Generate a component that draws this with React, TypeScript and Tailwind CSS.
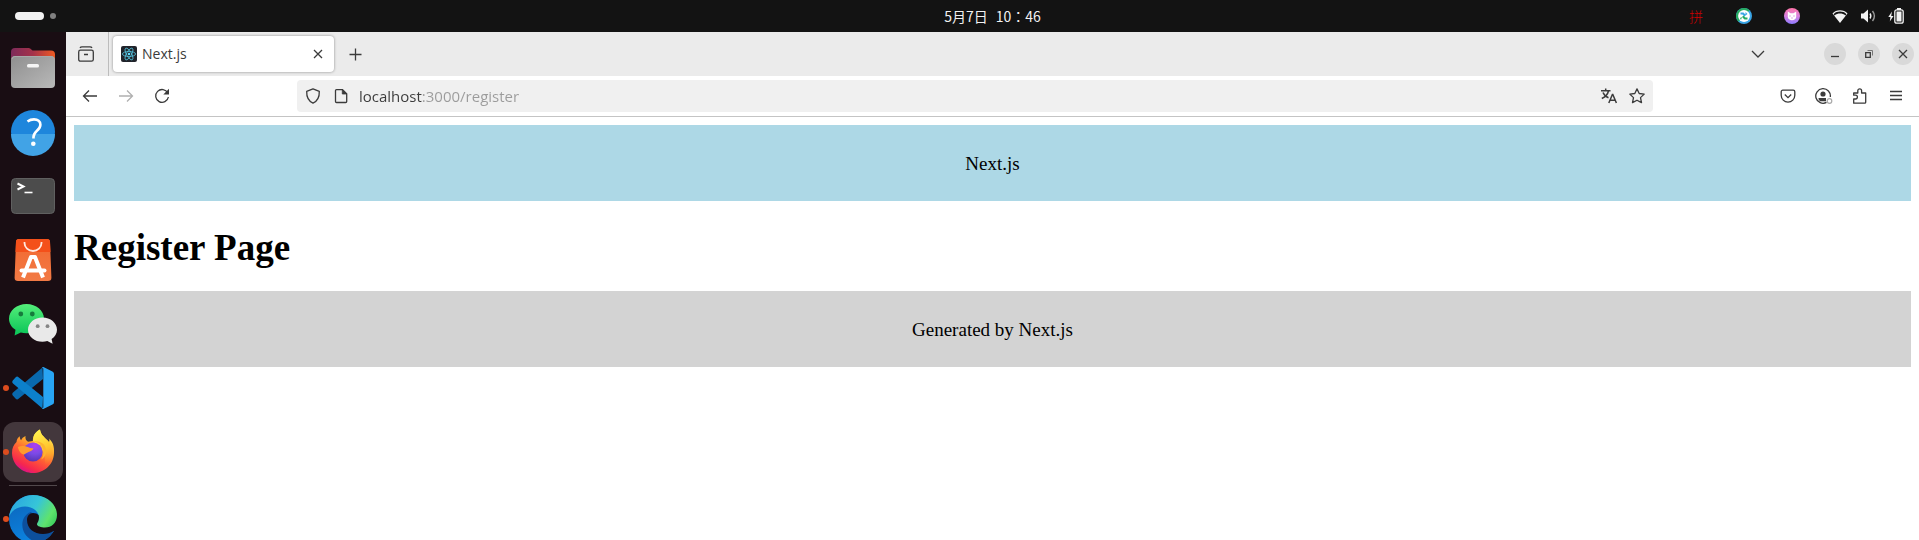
import { useState } from 'react';
import type { ReactNode } from 'react';

/* ---------- Dock icons ---------- */

const FilesIcon = () => (
  <svg viewBox="0 0 48 48" className="h-12 w-12">
    <defs>
      <linearGradient id="files-back" x1="0" x2="1">
        <stop offset="0" stopColor="#7d2a5a" />
        <stop offset="0.5" stopColor="#a5324a" />
        <stop offset="1" stopColor="#f05a22" />
      </linearGradient>
      <linearGradient id="files-front" x1="0" y1="0" x2="1" y2="1">
        <stop offset="0" stopColor="#8f8f8f" />
        <stop offset="1" stopColor="#b9b9b9" />
      </linearGradient>
    </defs>
    <path d="M2 16V8a4 4 0 0 1 4-4h13.500a3 3 0 0 1 2 .8L23.500 6.500H42a4 4 0 0 1 4 4V20H2z" fill="url(#files-back)" />
    <rect x="2" y="12" width="44" height="32" rx="4" fill="url(#files-front)" />
    <path d="M3 15a3 3 0 0 1 3-2.500h36a3 3 0 0 1 3 2.500" fill="none" stroke="#a9a9a9" />
    <rect x="18" y="20" width="12" height="3.500" rx="1.500" fill="#f5f5f5" />
  </svg>
);

const HelpIcon = () => (
  <svg viewBox="0 0 48 48" className="h-12 w-12">
    <circle cx="24" cy="24" r="22" fill="#1e86dc" />
    <path d="M2 26a22 22 0 0 0 44 0z" fill="#41a3e6" />
    <path d="M18.500 13.500c2-1.500 4.200-2.100 6.500-2.100 3.800 0 6.400 2 6.400 5.300 0 3-1.700 4.500-3.700 6.200-2.200 1.900-3.200 3.200-3.200 6.200v1.400" fill="none" stroke="#fff" strokeWidth="2.600" />
    <circle cx="24.300" cy="35.800" r="2.300" fill="#fff" />
  </svg>
);

const TerminalIcon = () => (
  <svg viewBox="0 0 48 48" className="h-12 w-12">
    <rect x="2.500" y="6.500" width="43" height="35" rx="4" fill="#4c4c4c" stroke="#606060" />
    <path d="M8.500 11.500l6 3-6 3" fill="none" stroke="#fff" strokeWidth="2" />
    <path d="M15.500 20.500h8" stroke="#fff" strokeWidth="1.600" />
  </svg>
);

const SoftwareIcon = () => (
  <svg viewBox="0 0 48 48" className="h-12 w-12">
    <defs>
      <linearGradient id="bag" x1="0" y1="0" x2="0" y2="1">
        <stop offset="0" stopColor="#f2682f" />
        <stop offset="1" stopColor="#f27a45" />
      </linearGradient>
    </defs>
    <path d="M10 3h28a3 3 0 0 1 3 2.800l1.400 35.700a3.400 3.400 0 0 1-3.400 3.500H9a3.400 3.400 0 0 1-3.400-3.500L7 5.800A3 3 0 0 1 10 3z" fill="url(#bag)" />
    <path d="M10 3h28a3 3 0 0 1 3 2.800l.5 10.200h-35L7 5.800A3 3 0 0 1 10 3z" fill="#f4501a" />
    <path d="M15.500 6v1a8.500 8 0 0 0 17 0V6" fill="none" stroke="#ffe9df" strokeWidth="1.800" />
    <path d="M14 41.500l8-20.500h4l8 20.500" fill="none" stroke="#fff" strokeWidth="4" strokeLinejoin="round" />
    <path d="M12.500 34.500h23" stroke="#fff" strokeWidth="4" strokeLinecap="round" />
  </svg>
);

const WeChatIcon = () => (
  <svg viewBox="0 0 48 48" className="h-12 w-12">
    <defs>
      <linearGradient id="wechat-green" x1="0" y1="0" x2="0" y2="1">
        <stop offset="0" stopColor="#54ee7a" />
        <stop offset="1" stopColor="#09c457" />
      </linearGradient>
    </defs>
    <path d="M17.500 4C7.800 4 0 10.500 0 18.700c0 4.500 2.500 8.500 6.500 11.100L5.600 35.500l6.200-3.100c1.800.5 3.700.8 5.700.8 9.700 0 17.500-6.300 17.500-14.500S27.200 4 17.500 4z" fill="url(#wechat-green)" />
    <circle cx="11.800" cy="14" r="2.400" fill="#167b3c" />
    <circle cx="23.300" cy="14" r="2.400" fill="#167b3c" />
    <path d="M33.500 17.500C25.500 17.500 19 23 19 29.700s6.500 12.100 14.500 12.100c1.700 0 3.300-.2 4.800-.7l5.300 2.600-1-4.600C45.900 36.900 48 33.500 48 29.700c0-6.700-6.500-12.200-14.500-12.200z" fill="#e9e9e9" />
    <circle cx="28.700" cy="26.200" r="1.900" fill="#858585" />
    <circle cx="38.500" cy="26.200" r="1.900" fill="#858585" />
  </svg>
);

const CodeIcon = () => (
  <svg viewBox="0 0 48 48" className="h-12 w-12">
    <path d="M4 31.800c-1-.9-1-2.400 0-3.300L33.500 3.500l.5 11.500L9.500 34.800a2.200 2.200 0 0 1-2.800 0z" fill="#0969ae" />
    <path d="M4 16.200c-1 .9-1 2.400 0 3.300L33.500 44.500l.5-11.500L9.500 13.200a2.200 2.200 0 0 0-2.800 0z" fill="#0c80cb" />
    <path d="M33 3.200c.3-.3.9-.3 1.400-.1l9 4.300A2.500 2.500 0 0 1 45 9.700v28.600a2.500 2.500 0 0 1-1.600 2.300l-9 4.300c-.5.200-1.100.2-1.400-.1l1.300-1.300V4.500z" fill="#28a4f3" />
  </svg>
);

const FirefoxIcon = () => (
  <svg viewBox="0 0 48 48" className="h-12 w-12">
    <defs>
      <linearGradient id="fx-body" x1="0.800" y1="0.050" x2="0.300" y2="1">
        <stop offset="0.050" stopColor="#ffe74a" />
        <stop offset="0.350" stopColor="#ffa72b" />
        <stop offset="0.600" stopColor="#ff5b35" />
        <stop offset="0.850" stopColor="#f6274e" />
        <stop offset="1" stopColor="#d8108f" />
      </linearGradient>
      <linearGradient id="fx-flame" x1="0.400" y1="0" x2="0.600" y2="1">
        <stop offset="0" stopColor="#fff44f" />
        <stop offset="0.550" stopColor="#ffc42e" />
        <stop offset="1" stopColor="#ff8b2d" stopOpacity="0" />
      </linearGradient>
      <radialGradient id="fx-globe" cx="0.600" cy="0.150" r="0.900">
        <stop offset="0" stopColor="#b13df0" />
        <stop offset="0.500" stopColor="#7a4ae6" />
        <stop offset="1" stopColor="#5332ae" />
      </radialGradient>
    </defs>
    <path d="M3 25c0-5 1.500-8 4.500-11 .2-2.400 1.200-4.200 3.200-5.700.1 2 .6 3.100 1.400 3.900.8-1.700 2-2.900 4.400-4.100-.3 2.700.1 4.200 2.500 5.600l4.800-.7C24 8 26 4 31 1.500c.5 4.500 3.500 7 7 10.500.6.3 1.400 1 2 2 .6-1.500.5-2.500 0-3.500C44 14 45.500 19 45 25c-.4 12-10 20-21 20S3.200 36.500 3 25z" fill="url(#fx-body)" />
    <path d="M24 13C24 8 26 4 31 1.500c.5 4.500 3.500 7 7 10.500 3 3.500 5 8 4.500 13-.3 6-3 10.500-6.500 13 1-8-1-16-7-20.500z" fill="url(#fx-flame)" />
    <circle cx="24" cy="24" r="9.600" fill="url(#fx-globe)" />
    <path d="M24 13.500c5 0 10.500 3.500 10.500 10.500 0 3-1 5.500-2.500 7.500 4-2 5.500-6 5-10-.7-5-5-9-13-8z" fill="#ffb42e" />
    <path d="M9 19c3-1.500 8-1 11.500.8 1 .6 2.600.5 3.900.7-.5 2-3.400 2.900-4.900 3.400-2 .8-3 2-4.500 2.500C12 26 9.500 23 9 19z" fill="#ff9a2e" />
  </svg>
);

const EdgeIcon = () => (
  <svg viewBox="0 0 48 48" className="h-12 w-12">
    <defs>
      <linearGradient id="edge-top" x1="0" y1="0.300" x2="1" y2="0.700">
        <stop offset="0" stopColor="#2aa7e0" />
        <stop offset="0.500" stopColor="#36c5d8" />
        <stop offset="0.850" stopColor="#5fe36c" />
        <stop offset="1" stopColor="#40d060" />
      </linearGradient>
      <linearGradient id="edge-left" x1="0" y1="0" x2="0.400" y2="1">
        <stop offset="0" stopColor="#0c62b8" />
        <stop offset="1" stopColor="#0c84e0" />
      </linearGradient>
    </defs>
    <circle cx="24" cy="24" r="24" fill="url(#edge-left)" />
    <path d="M22 17C13 20 11 31 16 39c3 4.500 8 7.500 13 8.500 7-1.500 13-6 16-12L34 30z" fill="#0d4f9c" />
    <path d="M24 18c-3.500 0-6 3-6 7 0 8.500 7 14 16 14 4 0 7.500-1.200 10.500-3L48 36V20H29.500c-1-1.300-3-2-5.500-2z" fill="#190d13" />
    <path d="M0 22C1.500 9.500 11.500 0 24 0c13.500 0 24 9 24 20 0 8-5.500 12.500-12 12.500-4 0-8-1.200-8-3.200 0-1.400 2-2.500 2-7C30 16.500 23.500 11.500 16 11.500 8.500 11.500 2.500 15.500 0 22z" fill="url(#edge-top)" />
  </svg>
);

/* ---------- Browser icons, all on a 16px grid ---------- */

const Glyph = ({ children, className = 'h-4 w-4' }: { children: ReactNode; className?: string }) => (
  <svg viewBox="0 0 16 16" fill="none" stroke="currentColor" strokeWidth="1.300" className={className}>
    {children}
  </svg>
);

const ReactLogo = () => (
  <svg viewBox="0 0 16 16" className="h-4 w-4 shrink-0">
    <rect width="16" height="16" rx="2" fill="#20232a" />
    <g fill="none" stroke="#53c1dc" strokeWidth="0.800">
      <ellipse cx="8" cy="8" rx="6.600" ry="2.500" />
      <ellipse cx="8" cy="8" rx="6.600" ry="2.500" transform="rotate(60 8 8)" />
      <ellipse cx="8" cy="8" rx="6.600" ry="2.500" transform="rotate(120 8 8)" />
    </g>
    <circle cx="8" cy="8" r="1.300" fill="#61dafb" />
  </svg>
);

/* ---------- Top bar ---------- */

const TopBar = () => (
  <header className="grid h-8 shrink-0 grid-cols-[66px_1fr_auto_1fr] items-center bg-[#131313] text-[#f2f2f2]">
    <button type="button" aria-label="Activities" className="flex items-center gap-1.5 pl-[15px]">
      <span className="h-2 w-[29px] rounded-full bg-[#f2f2f2]" />
      <span className="h-1.5 w-1.5 rounded-full bg-[#808080]" />
    </button>
    <span />
    <button type="button" className="flex gap-2 font-['Noto_Sans_CJK_TC',sans-serif] text-sm">
      <span>5月7日</span>
      <span>10：46</span>
    </button>
    <div className="flex items-center justify-end pr-[15px]">
      <button type="button" className="w-12 font-['Noto_Sans_CJK_SC',sans-serif] text-sm font-light text-[#d00000]">
        拼
      </button>
      <button type="button" aria-label="Sync" className="flex w-12 justify-center">
        <svg viewBox="0 0 16 16" className="h-4 w-4">
          <circle cx="8" cy="8" r="8" fill="#3aa5e6" />
          <path d="M2.300 13.700A8 8 0 0 1 13.700 2.300L8 8z" fill="#27ab62" />
          <circle cx="8" cy="8" r="5.900" fill="#fff" />
          <path d="M4.500 4.500h3L10 7 8.500 8.500 6.500 6.500h-2zM9.500 4l2 2-2 1.500z" fill="#3aa5e6" />
          <path d="M11.500 11.500h-3L6 9l1.500-1.500 2 2h2zM6 9l-1 3-1-2z" fill="#27ab62" />
        </svg>
      </button>
      <button type="button" aria-label="Proxy" className="mr-4 flex w-12 justify-center">
        <svg viewBox="0 0 16 16" className="h-4 w-4">
          <defs>
            <linearGradient id="cat" x1="0" y1="0" x2="0" y2="1">
              <stop offset="0" stopColor="#ff74a8" />
              <stop offset="0.500" stopColor="#d982e0" />
              <stop offset="1" stopColor="#8d7bff" />
            </linearGradient>
          </defs>
          <circle cx="8" cy="8" r="8" fill="url(#cat)" />
          <path d="M3.800 3.500L6.500 5.300h3l2.700-1.800v5.200c0 2.300-2 3.500-4.200 3.500S3.800 11 3.800 8.700z" fill="#fff" />
          <path d="M5.300 8h1.400M9.300 8h1.400M7.300 10h1.400" stroke="#d07ad8" strokeWidth="0.900" />
        </svg>
      </button>
      <button type="button" aria-label="System" className="flex items-center gap-3">
        <svg viewBox="0 0 16 16" className="h-4 w-4" fill="currentColor">
          <path d="M8 15L.5 5.500C2.500 3 5 2.200 8 2.200s5.500.8 7.500 3.300z" />
          <path d="M1.600 6.200C3.500 4.200 5.600 3.600 8 3.600s4.500.6 6.400 2.600l-1 1.200C12 6 10 5.400 8 5.400S4 6 2.600 7.400z" fill="#131313" />
        </svg>
        <svg viewBox="0 0 16 16" className="h-4 w-4">
          <path d="M1 5.500h2.500L8 1.500v13l-4.500-4H1z" fill="currentColor" />
          <path d="M10 5.500c1 1.500 1 3.500 0 5" fill="none" stroke="currentColor" strokeWidth="1.400" />
          <path d="M12.500 3c2.300 3 2.300 7 0 10" fill="none" stroke="#999" strokeWidth="1.400" />
        </svg>
        <svg viewBox="0 0 16 16" className="h-4 w-4">
          <path d="M4 3.500L.3 9H2.500l-.7 4.500L5.500 8H3.200z" fill="currentColor" />
          <path d="M9 0h4v2H9z" fill="currentColor" />
          <rect x="6.800" y="1.800" width="8.400" height="13.400" rx="2" fill="none" stroke="currentColor" strokeWidth="1.300" />
          <rect x="8.500" y="3.500" width="5" height="10" fill="currentColor" />
        </svg>
      </button>
    </div>
  </header>
);

/* ---------- Dock ---------- */

const apps = [
  { name: 'Files', icon: <FilesIcon />, running: false, active: false },
  { name: 'Help', icon: <HelpIcon />, running: false, active: false },
  { name: 'Terminal', icon: <TerminalIcon />, running: false, active: false },
  { name: 'Software', icon: <SoftwareIcon />, running: false, active: false },
  { name: 'WeChat', icon: <WeChatIcon />, running: false, active: false },
  { name: 'Visual Studio Code', icon: <CodeIcon />, running: true, active: false },
  { name: 'Firefox', icon: <FirefoxIcon />, running: true, active: true },
];

const DockItem = ({ name, icon, running, active }: (typeof apps)[number]) => (
  <button
    type="button"
    aria-label={name}
    className={`relative flex h-[60px] w-[60px] shrink-0 items-center justify-center rounded-xl ${
      active ? 'bg-[#43373c]' : ''
    }`}
  >
    {running && <span className="absolute top-1/2 left-0 h-1.5 w-1.5 -translate-y-1/2 rounded-full bg-[#dc4c1e]" />}
    {icon}
  </button>
);

const Dock = () => (
  <nav className="flex w-[66px] shrink-0 flex-col items-center overflow-hidden bg-[#190d13] pt-1.5">
    <div className="flex flex-col gap-1">
      {apps.map((app) => (
        <DockItem key={app.name} {...app} />
      ))}
    </div>
    <div className="mt-[3px] mb-[3px] h-px w-12 shrink-0 bg-[#51484c]" />
    <DockItem name="Edge" icon={<EdgeIcon />} running active={false} />
  </nav>
);

/* ---------- Browser ---------- */

const TabStrip = () => (
  <div className="flex h-11 items-center bg-[#ebebeb] pr-[5px] text-[#3b3b3b]">
    <button
      type="button"
      aria-label="Recent browsing"
      className="flex h-full w-[43px] items-center border-r border-[#bcbcbc] pl-3"
    >
      <Glyph>
        <rect x="0.700" y="4.200" width="14.600" height="11" rx="1.800" />
        <path d="M2 1.900C2.500 1 3 .8 4 .8h8c1 0 1.500.2 2 1.100M6 8.500h4" />
      </Glyph>
    </button>
    <div className="ml-1 flex h-9 w-[221px] items-center rounded bg-white px-2 shadow-[0_0_3px_rgba(0,0,0,0.4)]">
      <ReactLogo />
      <span className="ml-[5px] flex-1 font-['Open_Sans',sans-serif] text-sm">Next.js</span>
      <button type="button" aria-label="Close tab">
        <Glyph>
          <path d="M4 4l8 8M12 4l-8 8" />
        </Glyph>
      </button>
    </div>
    <button type="button" aria-label="New tab" className="ml-[3px] flex w-9 justify-center">
      <Glyph>
        <path d="M8.500 2.500v12M2.500 8.500h12" />
      </Glyph>
    </button>
    <button type="button" aria-label="List all tabs" className="mr-12 ml-auto flex w-9 justify-center">
      <Glyph>
        <path d="M2 5l6 6 6-6" />
      </Glyph>
    </button>
    <div className="flex gap-3">
      <button type="button" aria-label="Minimize" className="flex h-[22px] w-[22px] items-center justify-center rounded-full bg-[#d9d9d9]">
        <Glyph>
          <path d="M4 10.500h8" />
        </Glyph>
      </button>
      <button type="button" aria-label="Restore" className="flex h-[22px] w-[22px] items-center justify-center rounded-full bg-[#d9d9d9]">
        <Glyph>
          <path d="M4.700 6.700h4.600v4.600H4.700z" />
          <path d="M6.500 4.500h5v5" stroke="#777" strokeWidth="1" />
        </Glyph>
      </button>
      <button type="button" aria-label="Close" className="flex h-[22px] w-[22px] items-center justify-center rounded-full bg-[#d9d9d9]">
        <Glyph>
          <path d="M4 4l8 8M12 4l-8 8" />
        </Glyph>
      </button>
    </div>
  </div>
);

const toolButton = 'flex h-8 w-9 items-center justify-center';

const Toolbar = () => {
  const [url, setUrl] = useState('localhost:3000/register');

  return (
    <div className="flex h-[41px] items-center border-b border-[#c4c4c4] bg-white pr-[5px] pl-1.5 text-[#3b3b3b]">
      <button type="button" aria-label="Back" className={toolButton}>
        <Glyph>
          <path d="M15 8H1.500M7 2.500L1.500 8 7 13.500" />
        </Glyph>
      </button>
      <button type="button" aria-label="Forward" className={`${toolButton} text-[#b0b0b0]`} disabled>
        <Glyph>
          <path d="M1 8h13.500M9 2.500L14.500 8 9 13.500" />
        </Glyph>
      </button>
      <button type="button" aria-label="Reload" className={toolButton}>
        <Glyph>
          <path d="M13.800 5A6.400 6.400 0 1 0 14.400 9" />
          <path d="M15 .8v5.700H9.300z" fill="currentColor" stroke="none" />
        </Glyph>
      </button>

      <form className="mx-[117px] flex h-8 flex-1 items-center rounded bg-[#f0f0f0] px-2" onSubmit={(e) => e.preventDefault()}>
        <Glyph>
          <path d="M8 .8l6.300 2.500c.2 5-1.300 9.600-6.300 11.900C3 12.900 1.500 8.300 1.700 3.300z" strokeLinejoin="round" />
        </Glyph>
        <Glyph className="ml-3 h-4 w-4">
          <path d="M3.500 1.600h6l4.200 4.200v7.700c0 .6-.4 1-1 1H3.500c-.6 0-1-.4-1-1V2.600c0-.6.400-1 1-1z" />
          <path d="M9.300 1.600V6h4.400z" fill="currentColor" strokeWidth="0.800" />
        </Glyph>
        {/* the host is darker than the rest of the address */}
        <input
          type="text"
          aria-label="Address"
          value={url}
          onChange={(e) => setUrl(e.target.value)}
          className="ml-2.5 min-w-0 flex-1 bg-[linear-gradient(90deg,#3b3b3b_63px,#9b9b9b_63px)] bg-clip-text font-['Open_Sans',sans-serif] text-[15px] text-transparent caret-black outline-none"
        />
        <button type="button" aria-label="Translate">
          <Glyph>
            <path d="M0 2.700h9.500M4.700.5v2.200M7.500 3C6.800 6 4 9 .8 10.500M2 4.500C3 7 5 8.800 7.500 9.800" strokeWidth="1.500" />
            <path d="M7.800 15l3.600-8.500h.4L15.400 15M9 12.300h5.200" strokeWidth="1.500" />
          </Glyph>
        </button>
        <button type="button" aria-label="Bookmark" className="ml-3">
          <Glyph>
            <path
              d="M8 .9l2.200 4.600 5 .6-3.700 3.500 1 5L8 12.200l-4.500 2.400 1-5L.8 6.100l5-.6z"
              strokeLinejoin="round"
            />
          </Glyph>
        </button>
      </form>

      <button type="button" aria-label="Save to Pocket" className={toolButton}>
        <Glyph>
          <path d="M2.800 2.200h10.400c.9 0 1.600.7 1.600 1.600v3.500a6.800 6.800 0 0 1-13.600 0V3.800c0-.9.700-1.600 1.600-1.600z" />
          <path d="M4.800 6.500L8 9.600l3.200-3.100" />
        </Glyph>
      </button>
      <button type="button" aria-label="Account" className={toolButton}>
        <svg viewBox="0 0 18 16" fill="none" className="h-4 w-[18px]">
          <path d="M11.500 14.400A7.300 7.300 0 1 1 15.300 9" stroke="currentColor" strokeWidth="1.300" />
          <circle cx="8" cy="6" r="2.600" fill="currentColor" />
          <path d="M3.500 10h7.500v3.200H5.200C4 12.500 3.500 11.500 3.500 10z" fill="currentColor" />
          <circle cx="14.500" cy="13" r="2.300" stroke="#aaa" strokeWidth="1.200" />
        </svg>
      </button>
      <button type="button" aria-label="Extensions" className={toolButton}>
        <Glyph>
          <path
            d="M1.700 15.200V11h1.800a1.900 1.900 0 0 0 0-3.800H1.700V5h4.100V2.700a1.900 1.900 0 0 1 3.800 0V5h4.100v9.200c0 .6-.4 1-1 1z"
            strokeLinejoin="round"
          />
        </Glyph>
      </button>
      <button type="button" aria-label="Menu" className={toolButton}>
        <Glyph>
          <path d="M2 3.500h12M2 7.500h12M2 11.500h12" />
        </Glyph>
      </button>
    </div>
  );
};

/* ---------- Page ---------- */

const Page = () => (
  <div className="flex-1 bg-white p-2 font-['Liberation_Serif',serif] text-black">
    <div className="bg-[#add8e6] pt-[25px] pb-[23px] text-center text-[19px] leading-7">Next.js</div>
    <h1 className="pt-[22px] pb-[18px] text-[37px] leading-[50px] font-bold">Register Page</h1>
    <div className="bg-[#d3d3d3] pt-[25px] pb-[23px] text-center text-[19px] leading-7">Generated by Next.js</div>
  </div>
);

const App = () => (
  <div className="flex h-screen flex-col overflow-hidden">
    <TopBar />
    <div className="flex min-h-0 flex-1">
      <Dock />
      <main className="flex min-w-0 flex-1 flex-col">
        <TabStrip />
        <Toolbar />
        <Page />
      </main>
    </div>
  </div>
);

export default App;
